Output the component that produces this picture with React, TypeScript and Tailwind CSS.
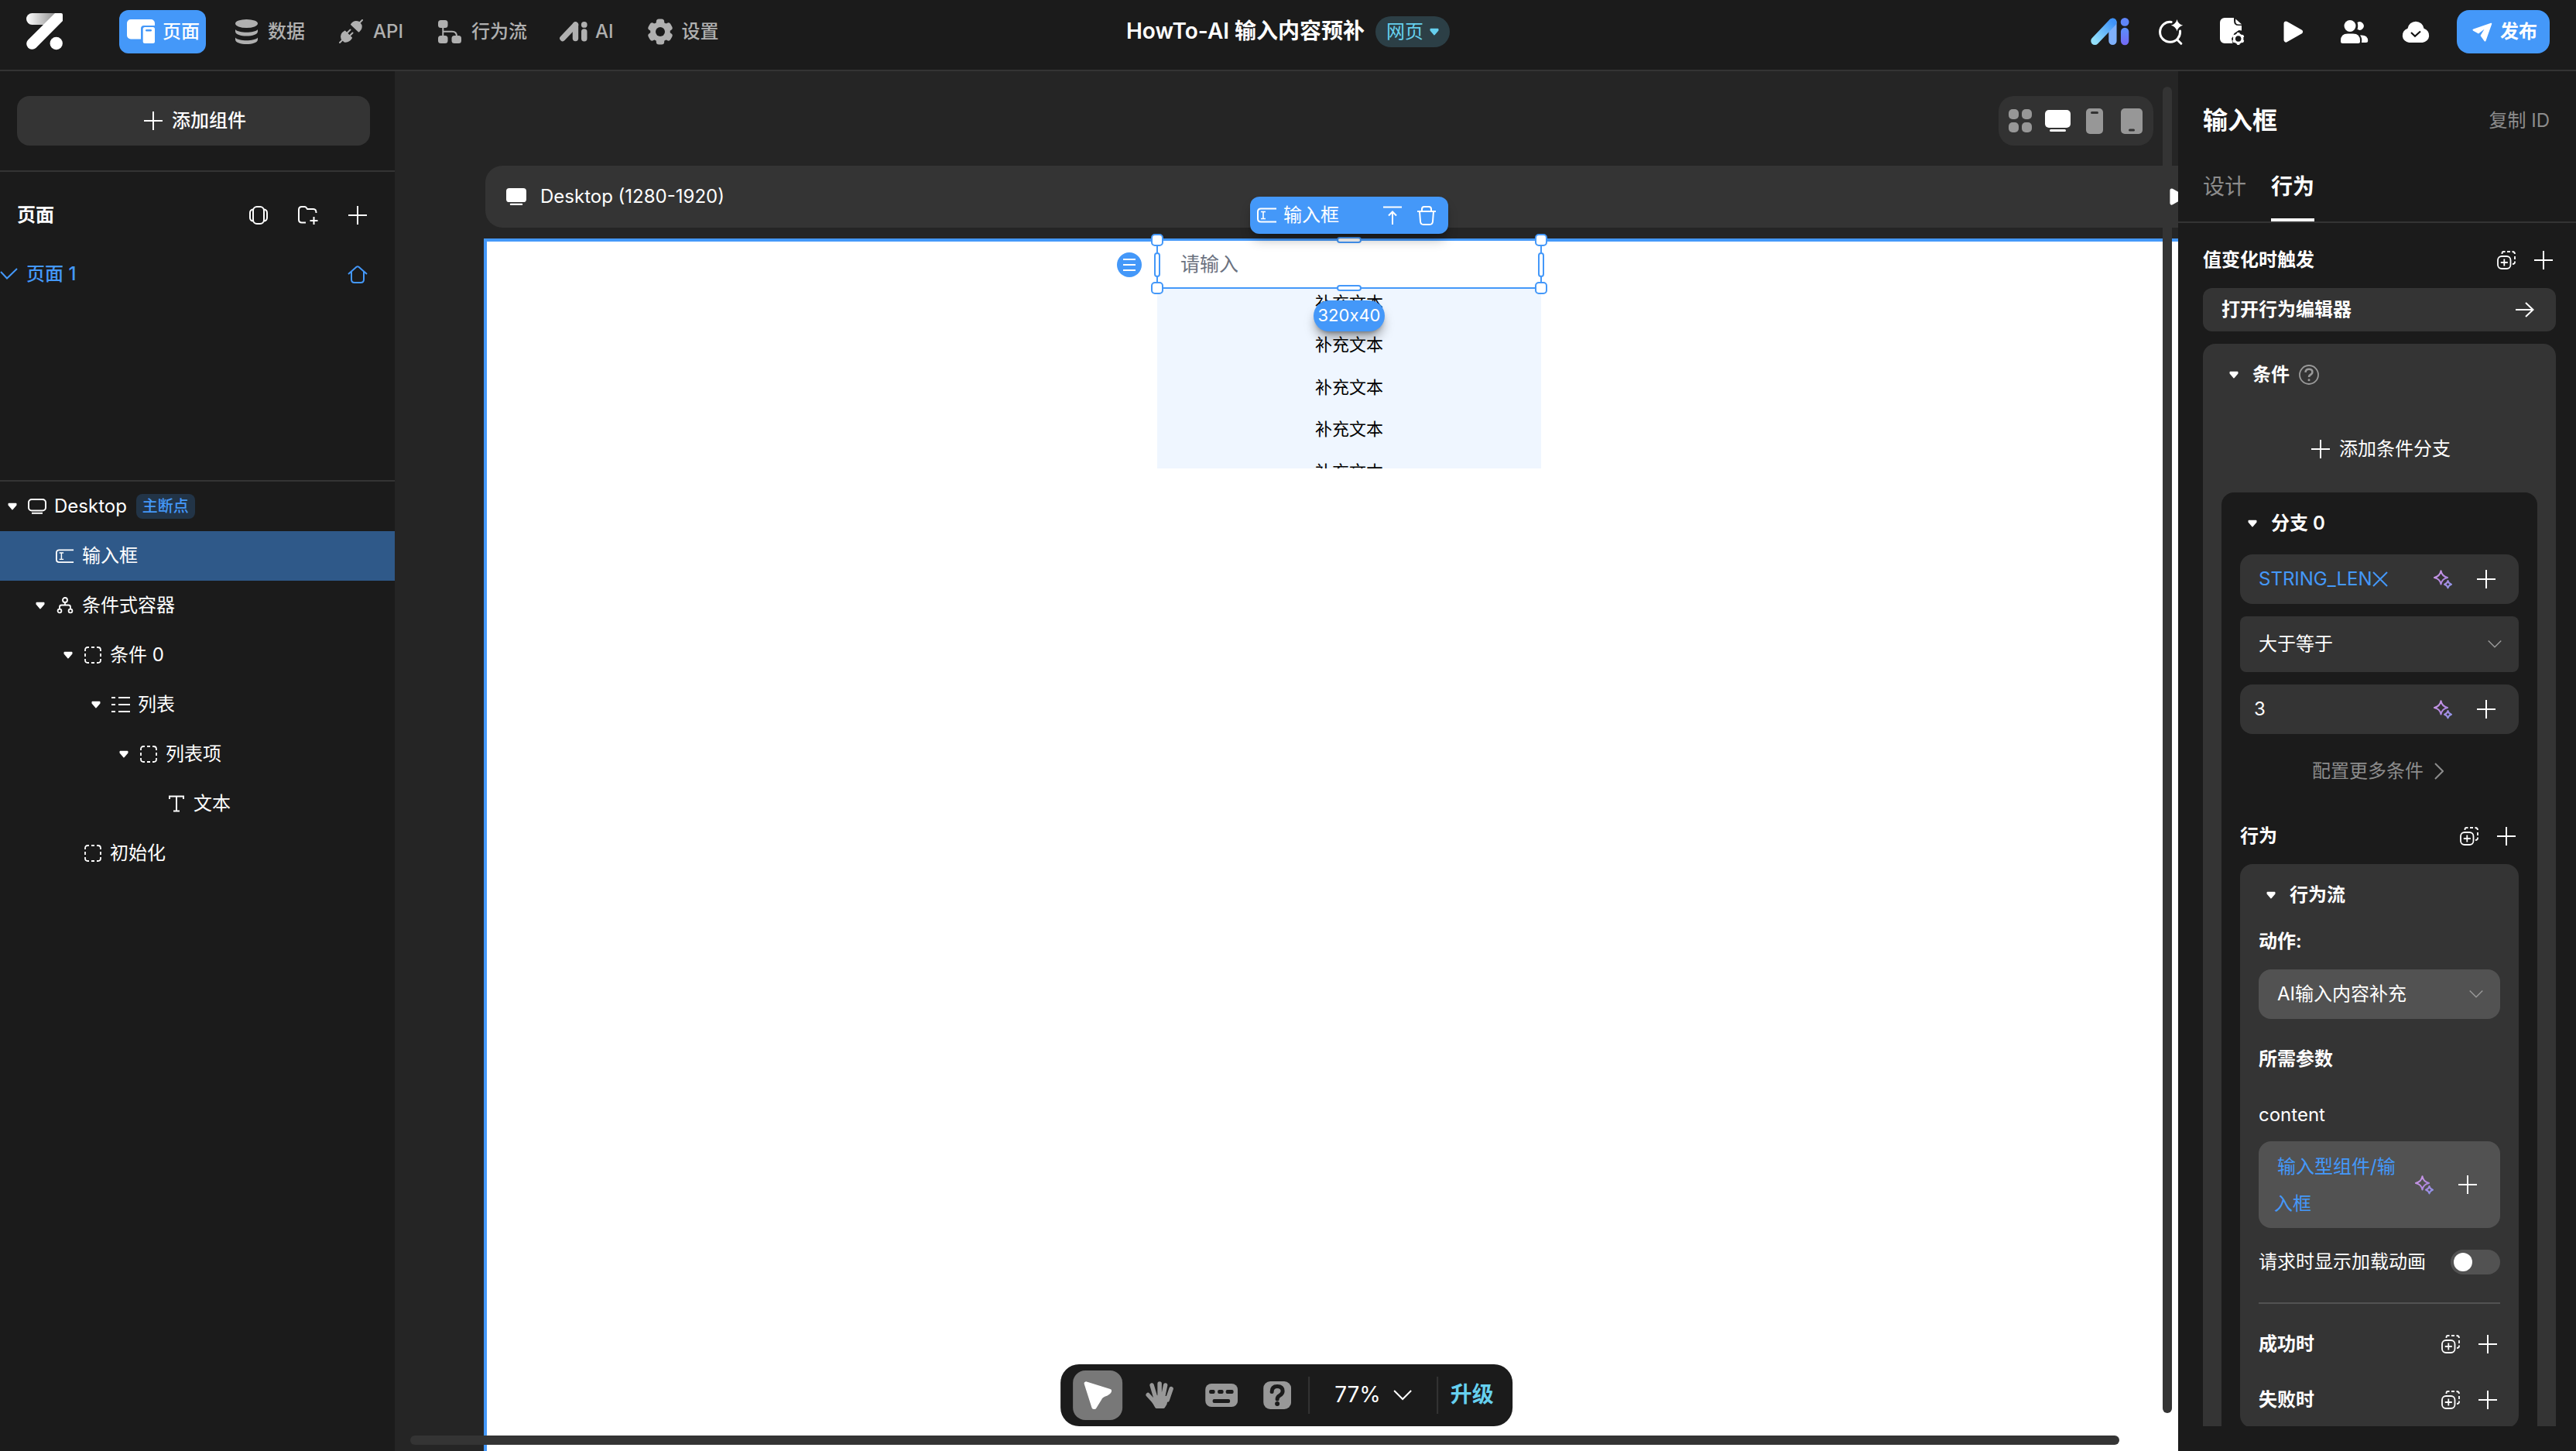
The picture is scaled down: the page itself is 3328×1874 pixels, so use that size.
import React, { useState } from "react";

type IconProps = { className?: string };

const Plus = ({ className = "size-6" }: IconProps) => (
  <svg viewBox="0 0 24 24" className={className} fill="none" stroke="currentColor" strokeWidth="2" aria-hidden="true">
    <path d="M12 0v24M0 12h24" />
  </svg>
);

const Caret = ({ className = "w-3" }: IconProps) => (
  <svg viewBox="0 0 12 10" className={className} fill="currentColor" stroke="currentColor" strokeWidth="2" strokeLinejoin="round" aria-hidden="true">
    <path d="M1.5 1.8h9v1.4L6 8.4 1.5 3.2z" />
  </svg>
);

const ChevronDown = ({ className = "w-5" }: IconProps) => (
  <svg viewBox="0 0 24 16" className={className} fill="none" stroke="currentColor" strokeWidth="2" aria-hidden="true">
    <path d="M1 2l11 11L23 2" />
  </svg>
);

const ChevronRight = () => (
  <svg viewBox="0 0 12 24" className="h-6 w-3" fill="none" stroke="currentColor" strokeWidth="2" aria-hidden="true">
    <path d="M1 2l10 10L1 22" />
  </svg>
);

const Logo = () => (
  <svg viewBox="0 0 48 48" className="size-12" aria-hidden="true">
    <defs>
      <linearGradient id="logo-bar" x1="0" x2="1" y1="0" y2="0">
        <stop offset="0" stopColor="#fff" />
        <stop offset="1" stopColor="#8f8f8f" />
      </linearGradient>
    </defs>
    <path d="M7.5 0H38L23 15H7.5a7.5 7.5 0 0 1 0-15z" fill="url(#logo-bar)" />
    <path d="M37 0h8q2 0 2 2v8L12.3 45A7.3 7.3 0 0 1 2 34.7z" fill="#fff" />
    <circle cx="38.7" cy="39" r="8.2" fill="#fff" />
  </svg>
);

const PagesIcon = () => (
  <svg viewBox="0 0 36 32" className="h-8 w-9" aria-hidden="true">
    <path d="M5 0h26a5 5 0 0 1 5 5v3H22a4 4 0 0 0-4 4v13.500H5a5 5 0 0 1-5-5V5a5 5 0 0 1 5-5z" fill="#fff" />
    <rect x="20.700" y="10" width="15.300" height="21" rx="2.500" fill="#fff" />
    <rect x="24" y="13" width="8" height="2.500" rx="1.200" fill="#4498f9" />
  </svg>
);

const DataIcon = () => (
  <svg viewBox="0 0 29 32" className="h-8" fill="currentColor" aria-hidden="true">
    <ellipse cx="14.500" cy="5.500" rx="14.500" ry="5.500" />
    <path d="M0 13c4 5 25 5 29 0v2.500c0 8-29 8-29 0z" />
    <path d="M0 23.500c4 5 25 5 29 0V26c0 8-29 8-29 0z" />
  </svg>
);

const ApiIcon = () => (
  <svg viewBox="0 0 32 32" className="h-8" fill="currentColor" stroke="currentColor" strokeLinecap="round" strokeLinejoin="round" aria-hidden="true">
    <path d="M16 6.500L25.500 15.500Q29.500 12 28.500 7.500L26 4Q20 1 16 6.500z" strokeWidth="2" />
    <path d="M26 5L30 1M5 26l-4 4M10.500 17.500l4-4M14 21l3.500-3.500" strokeWidth="2" fill="none" />
    <path d="M7.500 15.500L16 24Q12.500 29.500 7 28.500L3.500 25Q1.500 19 7.500 15.500z" strokeWidth="2" />
  </svg>
);

const FlowIcon = () => (
  <svg viewBox="0 0 30 30" className="h-[30px]" fill="currentColor" aria-hidden="true">
    <rect width="12.500" height="10" rx="3.500" />
    <rect y="20" width="12.500" height="10" rx="3.500" />
    <rect x="17.500" y="20" width="12.500" height="10" rx="3.500" />
    <path d="M6.300 9v12M6.300 14.800H18q6 0 6 6.200" fill="none" stroke="currentColor" strokeWidth="2" />
  </svg>
);

const AiMark = ({ className, colored }: IconProps & { colored?: boolean }) => (
  <svg viewBox="0 0 51 36" className={className} fill="none" strokeLinecap="round" aria-hidden="true">
    <defs>
      <linearGradient id="ai-a" x1="0" x2="1" y1="1" y2="0">
        <stop offset="0" stopColor="#93e0fb" />
        <stop offset="1" stopColor="#3f93f9" />
      </linearGradient>
      <linearGradient id="ai-i" x1="0" x2="0" y1="0" y2="1">
        <stop offset="0" stopColor="#5a90fb" />
        <stop offset="1" stopColor="#7468f4" />
      </linearGradient>
    </defs>
    <path d="M29 6v24.500" stroke={colored ? "#7fb0fa" : "currentColor"} strokeWidth="10.500" />
    <path d="M5.500 30.500L29 5.700" stroke={colored ? "url(#ai-a)" : "currentColor"} strokeWidth="10.500" />
    <circle cx="45" cy="5.500" r="5.500" fill={colored ? "#5f85fa" : "currentColor"} />
    <rect x="39.700" y="13" width="10.600" height="23" rx="5.300" fill={colored ? "url(#ai-i)" : "currentColor"} />
  </svg>
);

const GearIcon = () => (
  <svg viewBox="-17 -17 34 34" className="size-[34px]" fill="currentColor" aria-hidden="true">
    <circle r="12.800" />
    {[0, 60, 120, 180, 240, 300].map((a) => (
      <rect key={a} x="-5.200" y="-16.500" width="10.400" height="12" rx="3.500" transform={`rotate(${a})`} />
    ))}
    <circle r="6" fill="#1b1b1b" />
  </svg>
);

const SearchSpark = () => (
  <svg viewBox="0 0 32 33" className="h-[33px]" fill="none" aria-hidden="true">
    <path d="M16.200 3.400A13 13 0 1 0 27.500 15" stroke="#fff" strokeWidth="3" strokeLinecap="round" />
    <path d="M24 26.500l4.800 4.800" stroke="#fff" strokeWidth="3" strokeLinecap="round" />
    <path d="M23.500 0q1.500 6.300 7.700 7.700-6.200 1.500-7.700 7.700-1.500-6.200-7.700-7.700Q22 6.300 23.500 0z" fill="#fff" />
  </svg>
);

const FileGear = () => (
  <svg viewBox="0 0 32 36" className="h-9" fill="#fff" aria-hidden="true">
    <path d="M6 0h12v4q0 6 6 6h4v6.500l-3.500-.5-6 4-3.500 7 1.500 6H6a6 6 0 0 1-6-6V6a6 6 0 0 1 6-6z" />
    <path d="M20.200 1.500l8 7h-4q-4 0-4-4z" />
    <g transform="translate(23.700 27)">
      <circle r="5.300" fill="none" stroke="#fff" strokeWidth="3" />
      {[0, 60, 120, 180, 240, 300].map((a) => (
        <rect key={a} x="-1.900" y="-8" width="3.800" height="4" rx="1.200" transform={`rotate(${a})`} />
      ))}
    </g>
  </svg>
);

const PlayIcon = ({ className }: IconProps) => (
  <svg viewBox="0 0 26 28" className={className} fill="#fff" stroke="#fff" strokeWidth="6" strokeLinejoin="round" aria-hidden="true">
    <path d="M3.500 3.500L22 14 3.500 24.500z" />
  </svg>
);

const UsersIcon = () => (
  <svg viewBox="0 0 36 30" className="h-[30px]" fill="#fff" aria-hidden="true">
    <circle cx="12" cy="7.500" r="7.500" />
    <path d="M9 17.500h7q9 0 9 9v1q0 2.500-2.500 2.500h-20Q0 30 0 27.500v-1q0-9 9-9z" />
    <path d="M21.500 3a5.300 5.300 0 1 1 0 8.800q1.500-4.400 0-8.800z" />
    <path d="M25 19.500q10-1 10.200 7 0 2.500-2.500 2.500H27q1-6-2-9.500z" />
  </svg>
);

const CloudIcon = () => (
  <svg viewBox="0 0 36 28" className="h-7" aria-hidden="true">
    <path d="M9.300 28A9.300 9.300 0 0 1 7.500 9.800a10.600 10.600 0 0 1 21 0A9.300 9.300 0 0 1 26.700 28z" fill="#fff" />
    <path d="M12 15l5 4.700 7-6.200" fill="none" stroke="#111" strokeWidth="2.200" />
  </svg>
);

const SendIcon = () => (
  <svg viewBox="0 0 26 25" className="w-[26px]" aria-hidden="true">
    <path d="M24 .8L1.500 8.500q-2 .9-.3 2.300L8 14.500l7.500-5.700L10.500 17l5 7q1.300 1.300 2-.3L25.200 2Q25.500.300 24 .800z" fill="#fff" />
  </svg>
);

const GridIcon = () => (
  <svg viewBox="0 0 30 30" className="w-[30px]" fill="currentColor" aria-hidden="true">
    <rect width="13" height="13" rx="5" />
    <rect x="17" width="13" height="13" rx="5" />
    <rect y="17" width="13" height="13" rx="5" />
    <rect x="17" y="17" width="13" height="13" rx="5" />
  </svg>
);

const MonitorSolid = ({ className }: IconProps) => (
  <svg viewBox="0 0 33 28" className={className} fill="#fff" aria-hidden="true">
    <rect width="33" height="23" rx="5" />
    <rect x="6" y="25" width="21" height="3" rx="1.500" />
  </svg>
);

const PhoneIcon = () => (
  <svg viewBox="0 0 22 33" className="h-[33px]" fill="currentColor" aria-hidden="true">
    <rect width="22" height="33" rx="5" />
    <rect x="6" y="4" width="10" height="3" rx="1.500" fill="#323232" />
  </svg>
);

const TabletIcon = () => (
  <svg viewBox="0 0 28 33" className="h-[33px]" fill="currentColor" aria-hidden="true">
    <rect width="28" height="33" rx="5" />
    <rect x="10" y="26.500" width="8" height="3" rx="1.500" fill="#323232" />
  </svg>
);

const CarouselIcon = () => (
  <svg viewBox="0 0 24 24" className="size-6" fill="none" stroke="currentColor" strokeWidth="2" aria-hidden="true">
    <rect x="5" y="1" width="14" height="22" rx="5" />
    <path d="M5 4.500Q1 5 1 9v6q0 4 4 4.500M19 4.500q4 .5 4 4.500v6q0 4-4 4.500" />
  </svg>
);

const FolderPlus = () => (
  <svg viewBox="0 0 26 24" className="h-6" fill="none" stroke="currentColor" strokeWidth="2" aria-hidden="true">
    <path d="M10 21.500H5q-4 0-4-4V5q0-4 4-4h3.500q1.500 0 2.500 1.500L12 4h8q3.500 0 3.500 5" />
    <path d="M20.500 14v10M15.500 19h10" />
  </svg>
);

const HomeIcon = () => (
  <svg viewBox="0 0 26 23" className="w-[26px]" fill="none" stroke="currentColor" strokeWidth="2" strokeLinejoin="round" aria-hidden="true">
    <path d="M1 11L11.500 1.800q1.500-1.200 3 0L25 11" />
    <path d="M5 8v10q0 4 4 4h8q4 0 4-4V8" />
  </svg>
);

const CheckIcon = () => (
  <svg viewBox="0 0 24 16" className="w-6" fill="none" stroke="currentColor" strokeWidth="2" aria-hidden="true">
    <path d="M1 5l8 8.500L22 1" />
  </svg>
);

const MonitorLine = () => (
  <svg viewBox="0 0 24 20" className="w-6" fill="none" stroke="currentColor" strokeWidth="2" aria-hidden="true">
    <rect x="1" y="1" width="22" height="14.500" rx="4" />
    <path d="M5 18.800h14" />
  </svg>
);

const InputIcon = () => (
  <svg viewBox="0 0 26 20" className="w-[26px]" fill="none" stroke="currentColor" strokeWidth="2" aria-hidden="true">
    <path d="M25 1.500H5q-4 0-4 4v9q0 4 4 4h20" />
    <path d="M5 5.500h6M5 14.500h6M8 5.500v9" strokeWidth="1.600" />
  </svg>
);

const BranchIcon = () => (
  <svg viewBox="0 0 22 22" className="w-[22px]" fill="none" stroke="currentColor" strokeWidth="1.800" aria-hidden="true">
    <circle cx="11" cy="4" r="3" />
    <circle cx="4" cy="18" r="2.400" />
    <circle cx="18" cy="18" r="2.400" />
    <path d="M11 7v4M4 15.500V13q0-2.500 2.500-2.500h9Q18 10.500 18 13v2.500" />
  </svg>
);

const BoxIcon = () => (
  <svg viewBox="0 0 24 24" className="w-6" fill="none" stroke="currentColor" strokeWidth="1.800" aria-hidden="true">
    <path d="M2 7V5.500Q2 2 5.500 2H7M10 2h4M17 2h1.500Q22 2 22 5.500V7M22 10v4M22 17v1.500q0 3.500-3.500 3.500H17M14 22h-4M7 22H5.500Q2 22 2 18.500V17M2 14v-4" />
  </svg>
);

const ListIcon = () => (
  <svg viewBox="0 0 24 22" className="w-6" fill="none" stroke="currentColor" strokeWidth="2" aria-hidden="true">
    <path d="M0 2h5M9 2h15M0 11h5M9 11h15M0 20h5M9 20h15" />
  </svg>
);

const TextIcon = () => (
  <svg viewBox="0 0 20 22" className="w-5" fill="none" stroke="currentColor" strokeWidth="2" aria-hidden="true">
    <path d="M1 5V1.500h18V5M10 1.500v19M6 20.500h8" />
  </svg>
);

const ToTopIcon = () => (
  <svg viewBox="0 0 24 25" className="w-6" fill="none" stroke="currentColor" strokeWidth="2" aria-hidden="true">
    <path d="M0 1.500h24M12 24V7.500M7 12.500l5-5 5 5" />
  </svg>
);

const TrashIcon = () => (
  <svg viewBox="0 0 24 25" className="w-6" fill="none" stroke="currentColor" strokeWidth="2" aria-hidden="true">
    <path d="M0 7h24M6 7V4q0-3 3-3h6q3 0 3 3v3M3 7l1 13q.3 4 4 4h8q3.700 0 4-4l1-13" />
  </svg>
);

const CopyPlus = () => (
  <svg viewBox="0 0 24 24" className="size-6" fill="none" stroke="currentColor" strokeWidth="1.800" aria-hidden="true">
    <rect x="1" y="7" width="16.500" height="16" rx="5" />
    <path d="M9.300 10.500v9M4.800 15h9" />
    <path d="M6.500 4V3q0-2 2-2h2M13 1h4M19.500 1q3.500 0 3.500 3M23 7v4M23 13.500v1q0 2.500-3 2.500" />
  </svg>
);

const Sparkles = () => (
  <svg viewBox="0 0 24 25" className="w-6" fill="none" stroke="url(#spark)" strokeWidth="2" strokeLinejoin="round" aria-hidden="true">
    <defs>
      <linearGradient id="spark" x1="0" x2="24" y1="0" y2="24" gradientUnits="userSpaceOnUse">
        <stop offset="0" stopColor="#d3a0ea" />
        <stop offset="0.500" stopColor="#b487e0" />
        <stop offset="1" stopColor="#8795e6" />
      </linearGradient>
    </defs>
    <path d="M9.500 1.300q1.300 7 8.500 8.700-7.200 1.500-8.500 8.500Q8.200 11.500 1 10q7.200-1.700 8.500-8.700z" />
    <path d="M18.500 14q.8 3.700 4.500 4.700-3.700 1-4.500 4.700-.8-3.700-4.500-4.700 3.700-1 4.500-4.700z" />
  </svg>
);

const ArrowRight = () => (
  <svg viewBox="0 0 24 20" className="w-6" fill="none" stroke="currentColor" strokeWidth="2" aria-hidden="true">
    <path d="M0 10h22M13 1l9.500 9-9.500 9" />
  </svg>
);

const HelpIcon = () => (
  <svg viewBox="0 0 26 26" className="w-[26px]" fill="none" stroke="#9a9a9a" strokeWidth="1.800" aria-hidden="true">
    <circle cx="13" cy="13" r="12" />
    <path d="M8.500 9.800Q8.800 5.800 13 5.800t4.400 3.400Q17.600 11.500 15 13q-2 1.200-2 3" strokeWidth="2.600" />
    <circle cx="13" cy="19.700" r="1.500" fill="#9a9a9a" stroke="none" />
  </svg>
);

const CursorIcon = () => (
  <svg viewBox="0 0 36 36" className="w-9" fill="#fff" stroke="#fff" strokeWidth="5" strokeLinejoin="round" aria-hidden="true">
    <path d="M3 2.800L33.500 12.500Q33 14.500 29 16.500 22 19 20.500 23L14 33.500H12.800z" />
  </svg>
);

const HandIcon = () => (
  <svg viewBox="0 0 36 36" className="w-9" fill="currentColor" stroke="currentColor" strokeWidth="5.500" strokeLinecap="round" strokeLinejoin="round" aria-hidden="true">
    <path d="M3 17.500l10 11M8 5l5 17M18 3v19M25.500 5L22 22M33 9.500L28 24" />
    <path d="M13 20l14 1-1.500 8-2.500 4h-9l-4-7z" strokeWidth="4" />
  </svg>
);

const KeyboardIcon = () => (
  <svg viewBox="0 0 42 30" className="w-[42px]" fill="currentColor" aria-hidden="true">
    <rect width="42" height="30" rx="8" />
    <g fill="#1b1b1b">
      <rect x="5" y="8" width="7.500" height="5" rx="2" />
      <rect x="16" y="8" width="7.500" height="5" rx="2" />
      <rect x="26.500" y="8" width="10" height="5" rx="2" />
      <rect x="9.500" y="20" width="22.500" height="5" rx="2" />
    </g>
  </svg>
);

const QuestionIcon = () => (
  <svg viewBox="0 0 36 36" className="w-9" aria-hidden="true">
    <rect width="36" height="36" rx="9" fill="currentColor" />
    <path d="M11 13.500Q11 6.500 18 6.500t7 6.200Q25 16 21 18.300q-3 1.700-3 4.700" fill="none" stroke="#1b1b1b" strokeWidth="5" strokeLinecap="round" />
    <circle cx="18" cy="29" r="3" fill="#1b1b1b" />
  </svg>
);

const NAV = [
  { label: "页面", icon: <PagesIcon />, active: true },
  { label: "数据", icon: <DataIcon /> },
  { label: "API", icon: <ApiIcon /> },
  { label: "行为流", icon: <FlowIcon /> },
  { label: "AI", icon: <AiMark className="w-[38px]" /> },
  { label: "设置", icon: <GearIcon /> },
];

const ACTIONS = [
  { label: "AI", icon: <AiMark className="w-[50px]" colored /> },
  { label: "智能搜索", icon: <SearchSpark /> },
  { label: "文件配置", icon: <FileGear /> },
  { label: "预览", icon: <PlayIcon className="w-[26px]" /> },
  { label: "协作者", icon: <UsersIcon /> },
  { label: "云端保存", icon: <CloudIcon /> },
];

function Header() {
  return (
    <header className="grid h-[92px] shrink-0 grid-cols-[1fr_auto_1fr] items-start border-b-2 border-[#343434] bg-[#1b1b1b]">
      <div className="flex items-start">
        <a href="#home" aria-label="首页" className="mt-[17px] mr-[72px] ml-[34px]">
          <Logo />
        </a>
        <nav className="mt-[13px] flex gap-6">
          {NAV.map((n) => (
            <button
              key={n.label}
              className={
                n.active
                  ? "flex h-14 items-center gap-2.5 rounded-xl bg-[#4498f9] pr-2 pl-2.5 font-medium text-white"
                  : "flex h-14 items-center gap-2.5 rounded-xl pr-2 pl-2.5 font-medium text-[#b0b0b0]"
              }
            >
              <span className="flex w-9 shrink-0 justify-center">{n.icon}</span>
              <span className="whitespace-nowrap">{n.label}</span>
            </button>
          ))}
        </nav>
      </div>
      <div className="mt-[13px] flex h-14 items-center gap-3.5">
        <h1 className="text-[28px] font-semibold text-white">HowTo-AI 输入内容预补</h1>
        <button className="flex h-10 items-center gap-2 rounded-full bg-[#2c3f46] px-3.5 text-[#66d0ef]">
          网页
          <Caret className="w-3" />
        </button>
      </div>
      <div className="mt-[13px] mr-[34px] flex h-14 items-center justify-end gap-7">
        <div className="flex items-center gap-[29px]">
          {ACTIONS.map((a) => (
            <button key={a.label} aria-label={a.label} className="flex w-[50px] items-center justify-center">
              {a.icon}
            </button>
          ))}
        </div>
        <button className="flex h-14 items-center gap-2.5 rounded-2xl bg-[#4498f9] pr-4 pl-5 font-semibold text-white">
          <SendIcon />
          发布
        </button>
      </div>
    </header>
  );
}

type Node = { label: string; depth: number; icon: React.ReactNode; caret?: boolean; badge?: string; selected?: boolean };

const TREE: Node[] = [
  { label: "Desktop", depth: 0, icon: <MonitorLine />, caret: true, badge: "主断点" },
  { label: "输入框", depth: 1, icon: <InputIcon />, selected: true },
  { label: "条件式容器", depth: 1, icon: <BranchIcon />, caret: true },
  { label: "条件 0", depth: 2, icon: <BoxIcon />, caret: true },
  { label: "列表", depth: 3, icon: <ListIcon />, caret: true },
  { label: "列表项", depth: 4, icon: <BoxIcon />, caret: true },
  { label: "文本", depth: 5, icon: <TextIcon /> },
  { label: "初始化", depth: 2, icon: <BoxIcon /> },
];

function Sidebar() {
  return (
    <aside className="flex w-[510px] shrink-0 flex-col bg-[#1b1b1b] text-white">
      <div className="border-b-2 border-[#343434] pt-8 pr-8 pb-8 pl-[22px]">
        <button className="flex h-16 w-full items-center justify-center gap-3 rounded-2xl bg-[#343434] pl-1 font-medium">
          <Plus />
          添加组件
        </button>
      </div>
      <section className="h-[400px] border-b-2 border-[#343434] pt-8">
        <div className="flex h-12 items-center pr-9 pl-[22px]">
          <h2 className="flex-1 font-semibold">页面</h2>
          <div className="flex items-center gap-[39px]">
            <button aria-label="轮播"><CarouselIcon /></button>
            <button aria-label="新建文件夹"><FolderPlus /></button>
            <button aria-label="新建页面"><Plus /></button>
          </div>
        </div>
        <div className="mt-6 flex h-14 items-center pr-[35px] text-[#4498f9]">
          <CheckIcon />
          <a href="#page-1" className="ml-2.5 flex-1 font-medium">页面 1</a>
          <button aria-label="设为首页"><HomeIcon /></button>
        </div>
      </section>
      <ul>
        {TREE.map((n, i) => (
          <li key={i}>
            <button
              style={{ paddingLeft: 4 + n.depth * 36 }}
              className={n.selected ? "flex h-16 w-full items-center bg-[#2f5989]" : "flex h-16 w-full items-center"}
            >
              <span className="flex w-6 justify-center">{n.caret && <Caret />}</span>
              <span className="ml-2 flex w-6 justify-center">{n.icon}</span>
              <span className="ml-2.5">{n.label}</span>
              {n.badge && (
                <span className="ml-3 flex h-8 items-center rounded-lg bg-[#223447] px-2 text-xl font-medium text-[#4498f9]">
                  {n.badge}
                </span>
              )}
            </button>
          </li>
        ))}
      </ul>
    </aside>
  );
}

const HANDLES = [
  "-left-2 -top-2 size-4",
  "-right-2 -top-2 size-4",
  "-left-2 -bottom-2 size-4",
  "-right-2 -bottom-2 size-4",
  "left-1/2 -ml-4 -top-1 h-2 w-8",
  "left-1/2 -ml-4 -bottom-1 h-2 w-8",
  "-left-1 top-4 h-8 w-2",
  "-right-1 top-4 h-8 w-2",
];

function SelectedInput() {
  return (
    <div className="relative z-10 h-[62px] w-[496px] bg-white outline-2 -outline-offset-1 outline-[#4498f9]">
      <input
        aria-label="请输入"
        placeholder="请输入"
        className="size-full rounded-lg bg-white px-[30px] text-[25px] text-black placeholder:text-[#6b7280]"
      />
      {HANDLES.map((h) => (
        <span key={h} className={`absolute rounded-[5px] border-2 border-[#4498f9] bg-white ${h}`} />
      ))}
      <button aria-label="拖动" className="absolute top-4 -left-[52px] flex size-8 items-center justify-center rounded-full bg-[#4498f9]">
        <svg viewBox="0 0 16 16" className="size-4" stroke="#fff" strokeWidth="2" aria-hidden="true">
          <path d="M0 1h16M0 8h16M0 15h16" />
        </svg>
      </button>
      <div className="absolute -top-14 left-[120px] flex h-12 w-64 items-center rounded-xl bg-[#4498f9] pr-4 pl-[9px] text-white shadow-lg shadow-black/30">
        <InputIcon />
        <span className="ml-2 flex-1">输入框</span>
        <button aria-label="选择父级" className="mr-5"><ToTopIcon /></button>
        <button aria-label="删除"><TrashIcon /></button>
      </div>
      <span className="absolute top-[78px] left-[202px] flex h-10 w-[92px] items-center justify-center rounded-full bg-[#4498f9] text-[22px] text-white shadow-lg shadow-black/40 [font-variant-ligatures:no-contextual]">
        320x40
      </span>
    </div>
  );
}

function Toolbar() {
  return (
    <div className="absolute bottom-8 left-1/2 flex h-20 -translate-x-1/2 items-center rounded-3xl bg-[#1b1b1b] pr-6 pl-4 text-[#989898]">
      <button aria-label="选择" className="flex size-16 items-center justify-center rounded-2xl bg-[#787878]"><CursorIcon /></button>
      <button aria-label="抓手" className="ml-[30px]"><HandIcon /></button>
      <button aria-label="快捷键" className="ml-[41px]"><KeyboardIcon /></button>
      <button aria-label="帮助" className="ml-[33px]"><QuestionIcon /></button>
      <span className="ml-[22px] h-12 w-0.5 bg-[#343434]" />
      <button className="ml-8 flex items-center gap-4 text-[28px] text-white">
        77%
        <ChevronDown className="w-6" />
      </button>
      <span className="ml-8 h-12 w-0.5 bg-[#343434]" />
      <button className="ml-4 text-[28px] font-semibold text-[#66d0ef]">升级</button>
    </div>
  );
}

function Canvas() {
  return (
    <main className="relative flex min-w-0 flex-1 flex-col overflow-hidden bg-[#252525]">
      <div className="mt-8 mr-8 flex h-16 w-[200px] shrink-0 items-center gap-0 self-end rounded-[20px] bg-[#323232] px-1 text-[#979797]">
        <button aria-label="全部断点" className="flex flex-1 justify-center"><GridIcon /></button>
        <button aria-label="桌面" className="flex flex-1 justify-center"><MonitorSolid className="w-[33px]" /></button>
        <button aria-label="手机" className="flex flex-1 justify-center"><PhoneIcon /></button>
        <button aria-label="平板" className="flex flex-1 justify-center"><TabletIcon /></button>
      </div>
      <div className="absolute top-5 right-2 bottom-[49px] z-10 w-3 rounded-full bg-[#343434]" />
      <div className="z-10 mt-[26px] -mr-[47px] ml-[117px] flex h-20 shrink-0 items-center rounded-[22px] bg-[#343434] pr-[38px] pl-[27px] text-white">
        <MonitorSolid className="w-[26px]" />
        <span className="ml-[18px] flex-1">Desktop (1280-1920)</span>
        <button aria-label="预览断点"><PlayIcon className="h-[22px]" /></button>
      </div>
      <div className="mt-3.5 -mr-[47px] ml-[115px] flex flex-1 flex-col items-center border-4 border-b-0 border-[#4498f9] bg-white">
        <div className="-mt-0.5">
          <SelectedInput />
        </div>
        <div className="h-[233px] w-[496px] overflow-hidden bg-[#eff6ff]">
          <ul className="-mt-2 grid h-[273px] grid-rows-5 text-[22px] text-black">
            {[0, 1, 2, 3, 4].map((i) => (
              <li key={i} className="flex items-center justify-center">补充文本</li>
            ))}
          </ul>
        </div>
      </div>
      <div className="absolute right-[76px] bottom-2 left-5 h-3 rounded-full bg-[#343434]" />
      <Toolbar />
    </main>
  );
}

function AddPair({ label }: { label: string }) {
  return (
    <div className="flex items-center gap-6">
      <button aria-label={`${label} 复制添加`}><CopyPlus /></button>
      <button aria-label={`${label} 添加`}><Plus /></button>
    </div>
  );
}

function Select({ label, value, className }: { label: string; value: string; className: string }) {
  return (
    <div className="relative flex items-center">
      <select aria-label={label} className={`w-full appearance-none px-6 text-white ${className}`}>
        <option>{value}</option>
      </select>
      <ChevronDown className="pointer-events-none absolute right-[22px] w-[18px] text-[#999999]" />
    </div>
  );
}

function Panel() {
  const [loading, setLoading] = useState(false);
  return (
    <aside className="flex w-[514px] shrink-0 flex-col bg-[#1b1b1b] text-white">
      <div className="flex h-32 shrink-0 items-center justify-between pr-[34px] pl-8">
        <h2 className="text-[32px] font-semibold">输入框</h2>
        <button className="text-[#8c8c8c]">复制 ID</button>
      </div>
      <div role="tablist" className="flex h-[68px] shrink-0 gap-8 border-b-2 border-[#343434] pl-8 text-[28px]">
        <button role="tab" aria-selected="false" className="border-b-4 border-transparent pb-[18px] text-[#8c8c8c]">设计</button>
        <button role="tab" aria-selected="true" className="border-b-4 border-white pb-[18px] font-semibold">行为</button>
      </div>
      <div className="mb-8 flex min-h-0 flex-1 flex-col overflow-hidden pr-[26px] pl-8">
        <div className="flex h-[84px] shrink-0 items-center justify-between pt-3 pr-1">
          <h3 className="font-semibold">值变化时触发</h3>
          <AddPair label="触发" />
        </div>
        <button className="flex h-14 shrink-0 items-center justify-between rounded-xl bg-[#343434] pr-7 pl-6 font-semibold">
          打开行为编辑器
          <ArrowRight />
        </button>
        <section className="mt-4 shrink-0 rounded-2xl bg-[#343434] px-6 pb-6">
          <div className="flex h-20 items-center pl-2.5">
            <Caret className="w-3" />
            <h3 className="mr-3 ml-[18px] font-semibold">条件</h3>
            <HelpIcon />
          </div>
          <button className="mt-6 flex h-16 w-full items-center justify-center gap-3 pl-1">
            <Plus />
            添加条件分支
          </button>
          <section className="mt-6 rounded-2xl bg-[#1b1b1b] px-6 pb-6">
            <h3 className="flex h-20 items-center pl-2.5 font-semibold">
              <Caret className="mr-[18px] w-3" />
              分支 0
            </h3>
            <div className="flex h-16 items-center rounded-2xl bg-[#343434] pr-[30px] pl-6">
              <button className="flex flex-1 items-center text-[#4498f9]">
                STRING_LEN
                <svg viewBox="0 0 20 20" className="w-5" fill="none" stroke="currentColor" strokeWidth="2" aria-hidden="true">
                  <path d="M1 1l18 18M19 1L1 19" />
                </svg>
              </button>
              <button aria-label="AI 生成" className="mr-8"><Sparkles /></button>
              <button aria-label="添加公式"><Plus /></button>
            </div>
            <div className="mt-4">
              <Select label="比较方式" value="大于等于" className="h-[72px] rounded-lg bg-[#343434]" />
            </div>
            <div className="mt-4 flex h-16 items-center rounded-2xl bg-[#343434] pr-[30px] pl-[18px]">
              <input aria-label="比较值" defaultValue="3" className="min-w-0 flex-1" />
              <button aria-label="AI 生成" className="mr-8"><Sparkles /></button>
              <button aria-label="添加数值"><Plus /></button>
            </div>
            <button className="mt-4 flex h-16 w-full items-center justify-center gap-3.5 pr-1 text-[#8c8c8c]">
              配置更多条件
              <ChevronRight />
            </button>
            <div className="mt-4 flex h-[72px] items-center justify-between pr-1">
              <h3 className="font-semibold">行为</h3>
              <AddPair label="行为" />
            </div>
            <section className="rounded-2xl bg-[#343434] px-6">
              <h3 className="flex h-20 items-center pl-2.5 font-semibold">
                <Caret className="mr-[18px] w-3" />
                行为流
              </h3>
              <p className="flex h-10 items-center font-semibold">动作:</p>
              <div className="mt-4">
                <Select label="动作" value="AI输入内容补充" className="h-16 rounded-2xl bg-[#525252]" />
              </div>
              <h4 className="mt-8 flex h-10 items-center font-semibold">所需参数</h4>
              <p className="mt-8 flex h-10 items-center">content</p>
              <div className="mt-3.5 flex h-28 items-center rounded-2xl bg-[#525252] pr-[30px] pl-5">
                <p className="w-40 flex-1 pt-0.5 indent-1 leading-[48px] text-[#4498f9]">输入型组件/输入框</p>
                <button aria-label="AI 生成" className="mr-8 ml-5"><Sparkles /></button>
                <button aria-label="添加参数"><Plus /></button>
              </div>
              <label className="mt-6 flex h-10 items-center justify-between">
                请求时显示加载动画
                <input
                  type="checkbox"
                  role="switch"
                  checked={loading}
                  onChange={(e) => setLoading(e.target.checked)}
                  className="h-8 w-16 appearance-none rounded-full bg-[#525252] p-1 before:block before:size-6 before:rounded-full before:bg-white checked:bg-[#4498f9] checked:before:ml-8"
                />
              </label>
              <hr className="mt-8 border-t-2 border-[#525252]" />
              <div className="mt-4 flex h-[72px] items-center justify-between pr-1">
                <h4 className="font-semibold">成功时</h4>
                <AddPair label="成功时" />
              </div>
              <div className="flex h-[72px] items-center justify-between pr-1">
                <h4 className="font-semibold">失败时</h4>
                <AddPair label="失败时" />
              </div>
            </section>
          </section>
        </section>
      </div>
    </aside>
  );
}

export default function App() {
  return (
    <div lang="zh-CN" className="flex h-screen min-h-[900px] flex-col font-['Inter','Noto_Sans_CJK_SC',sans-serif] text-2xl">
      <Header />
      <div className="flex min-h-0 flex-1">
        <Sidebar />
        <Canvas />
        <Panel />
      </div>
    </div>
  );
}
